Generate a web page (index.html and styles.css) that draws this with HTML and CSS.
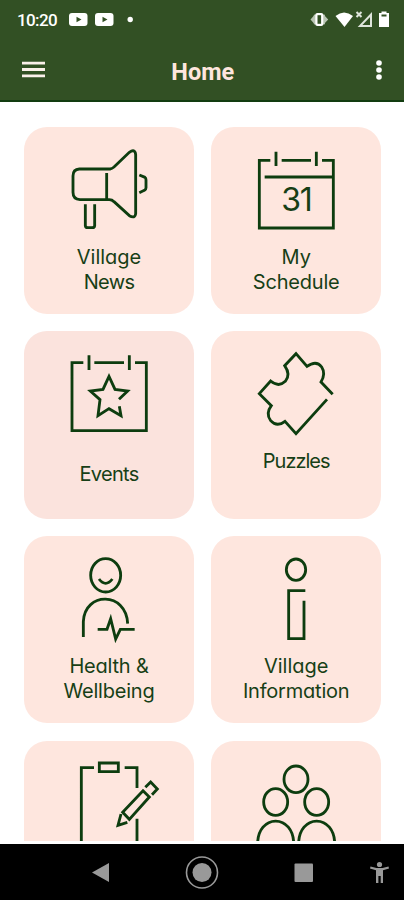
FILE: index.html
```
<!DOCTYPE html>
<html lang="en">
<head>
<meta charset="UTF-8">
<title>Home</title>
<meta name="viewport" content="width=device-width, initial-scale=1.0">
<link rel="stylesheet" href="styles.css">
</head>
<body>
<div class="app">
  <header class="header">
    <div class="status">
      <span class="clock">10:20</span>
      <svg class="status-left" viewBox="0 0 70 20">
        <rect x="0" y="3" width="18.500" height="13" rx="3"/>
        <rect x="26" y="3" width="18.500" height="13" rx="3"/>
        <path class="play" d="M7.500 6.700l5 2.800-5 2.800zM33.500 6.700l5 2.800-5 2.800z"/>
        <circle cx="61.200" cy="9.500" r="2.700"/>
      </svg>
      <svg class="status-right" viewBox="0 0 84 20">
        <path class="faint" d="M4 5.500L0.500 9.500l3.500 4zM14.500 5.500l3.700 4-3.700 4z"/>
        <rect class="faint" x="3.800" y="4.500" width="11.200" height="10" rx="1"/>
        <rect x="5.300" y="3" width="8" height="13" rx="2"/>
        <rect class="play" x="7.500" y="5.200" width="3.600" height="8.600"/>
        <path d="M25.500 6q8.500-7 17.500 0l-8.500 11z"/>
        <path class="thin" d="M61 4.500v11.500H50zM46.500 2l5 5M51.500 2l-5 5"/>
        <path d="M69 3h2.500V1.500h5V3H79v14H69z"/>
        <rect class="play" x="71.500" y="4.500" width="5" height="2"/>
      </svg>
    </div>
    <div class="toolbar">
      <svg class="menu" viewBox="0 0 24 18"><path d="M0 2.100h23M0 8.500h23M0 14.800h23"/></svg>
      <h1 class="title">Home</h1>
      <svg class="more" viewBox="0 0 6 22"><circle cx="3" cy="4" r="2.800"/><circle cx="3" cy="11" r="2.800"/><circle cx="3" cy="18" r="2.800"/></svg>
    </div>
  </header>

  <main class="tiles">
    <a class="tile">
      <svg class="icon" viewBox="12 20 510 345">
        <path d="M178 146H270Q276 145 282 140L328 96Q345 84 347 103V280Q345 296 328 286L282 244Q276 238 268 238H180Q159 237 159 216V167Q159 147 178 146zM260 158V238M358 164L375 171Q378 173 378 179V202Q378 208 373 210L358 217M196 252V316Q197 322 203 322H217Q223 322 224 316V252"/>
      </svg>
      <span class="label">Village<br><span class="tight">News</span></span>
    </a>
    <a class="tile">
      <svg class="icon" viewBox="15 20 510 345">
        <path d="M193 120H160V323H382V120H348M227 120H315M210 94V137M331 94V137M176 170H382"/>
        <text class="day" x="271" y="273">31</text>
      </svg>
      <span class="label">My<br><span class="snug">Schedule</span></span>
    </a>
    <a class="tile pressed">
      <svg class="icon" viewBox="12 19 510 345">
        <path d="M190 114H156V318H379V114H345M223 114H312M207 92V136M328 92V136M297 224L323 199L285 194L267 155L249 194L211 199L240 225L234 273L267 252L303 273L298 245"/>
      </svg>
      <span class="label low tight">Events</span>
    </a>
    <a class="tile">
      <svg class="icon" viewBox="15 19 510 345">
        <path d="M380 209L345 172Q360 147 347 127Q331 105 303 125L270 87L236 123Q255 150 238 170Q218 189 194 169L160 207L196 243Q178 267 194 288Q213 309 237 290L270 327L363 224"/>
      </svg>
      <span class="label tighter">Puzzles</span>
    </a>
    <a class="tile">
      <svg class="icon" viewBox="12 18 510 345">
        <ellipse cx="257" cy="136" rx="45" ry="50"/>
        <path d="M237 147Q257 173 277 147M190 321V275C194 184 319 184 323 281M233 298H261L272 266L287 327L301 298H344"/>
      </svg>
      <span class="label snug">Health &amp;<br>Wellbeing</span>
    </a>
    <a class="tile">
      <svg class="icon" viewBox="15 18 510 345">
        <ellipse cx="270" cy="119" rx="29" ry="32"/>
        <path d="M298 182H248V326H294V212"/>
      </svg>
      <span class="label">Village<br><span class="snug">Information</span></span>
    </a>
    <a class="tile">
      <svg class="icon" viewBox="12 17 510 345">
        <path d="M222 97H184V370M314 97H351V158M351 250V370M238 83H295V109H238zM369 166L388 185L328 252L308 231zM376 156L392 140L412 161L396 178M303 236L294 270L322 261"/>
      </svg>
    </a>
    <a class="tile">
      <svg class="icon" viewBox="15 17 510 345">
        <ellipse cx="270" cy="132" rx="36" ry="40"/>
        <ellipse cx="209" cy="200" rx="36" ry="40"/>
        <ellipse cx="332" cy="200" rx="36" ry="40"/>
        <path d="M155 330C152 233 266 233 263 330M278 330C275 233 389 233 386 330"/>
      </svg>
    </a>
  </main>

  <nav class="navbar">
    <svg viewBox="0 0 404 56">
      <path d="M92 28.500L109 19V38z"/>
      <circle class="ring" cx="202" cy="28.500" r="15.500"/>
      <circle cx="202" cy="28.500" r="9.500"/>
      <rect x="294.500" y="19.500" width="18.500" height="18.500" rx="1"/>
      <circle cx="379.500" cy="20.500" r="2.600"/>
      <path d="M370.500 22.500l6 1.500h6l6-1.500.5 2-6 1.800V39h-2.300v-7h-2.300v7H376V26.300l-6-1.800z"/>
    </svg>
  </nav>
</div>
</body>
</html>
```
FILE: styles.css
```
body, html {
  height: 100%;
  margin: 0;
  box-sizing: border-box;
}
.app {
  display: flex;
  flex-direction: column;
  height: 900px;
  overflow: hidden;
  background: #fff;
  font-family: Inter, "Liberation Sans", sans-serif;
}

/* header */
.header {
  flex: none;
  height: 100px;
  background: #325024;
  border-bottom: 2px solid #123c10;
  font-family: Roboto, sans-serif;
}
.status {
  display: flex;
  align-items: center;
  height: 40px;
  padding: 0 10.5px 0 17px;
  fill: #fff;
}
.clock {
  width: 52px;
  color: #fff;
  font-size: 17px;
  font-weight: 500;
  letter-spacing: -0.6px;
}
.status-left {
  width: 70px;
  height: 20px;
}
.status-right {
  width: 84px;
  height: 20px;
  margin-left: auto;
}
.play {
  fill: #325024;
}
.faint {
  fill: #b9c4b3;
}
.thin {
  fill: none;
  stroke: #dfe5dc;
  stroke-width: 2;
}
.toolbar {
  display: flex;
  align-items: center;
  justify-content: space-between;
  height: 60px;
  padding: 0 22px 0 21.5px;
}
.menu {
  width: 24px;
  height: 18px;
  stroke: #fbf0ea;
  stroke-width: 2.8;
}
.title {
  margin: 3px 0 0 -16px;
  color: #fee6de;
  font-size: 23.5px;
  font-weight: 700;
}
.more {
  width: 6px;
  height: 22px;
  fill: #fff;
}

/* tiles */
.tiles {
  flex: none;
  display: grid;
  grid-template-columns: 170px 170px;
  grid-auto-rows: 187.5px;
  gap: 17.2px;
  box-sizing: border-box;
  height: 739px;
  padding: 24.6px 23px 0 24px;
  overflow: hidden;
}
.tile {
  display: flex;
  flex-direction: column;
  background: #fee6de;
  border-radius: 23px;
  color: #173f16;
}
.pressed {
  background: #fbe3dd;
}
.icon {
  width: 170px;
  height: 115px;
  fill: none;
  stroke: #0d3d0f;
  stroke-width: 8.5;
}
.day {
  fill: #173f16;
  stroke: none;
  font-size: 96px;
  letter-spacing: -4px;
  text-anchor: middle;
}
.label {
  margin-top: 3px;
  font-size: 20px;
  line-height: 25.5px;
  text-align: center;
  font-feature-settings: "cv11";
}
.low {
  margin-top: 16px;
}
.snug {
  letter-spacing: -0.2px;
}
.tight {
  letter-spacing: -0.7px;
}
.tighter {
  letter-spacing: -1px;
}

/* system navigation */
.navbar {
  height: 56px;
  margin-top: auto;
  background: #000;
}
.navbar svg {
  display: block;
  width: 404px;
  height: 56px;
  fill: #999;
}
.navbar .ring {
  fill: none;
  stroke: #999;
  stroke-width: 1.6;
}
```
